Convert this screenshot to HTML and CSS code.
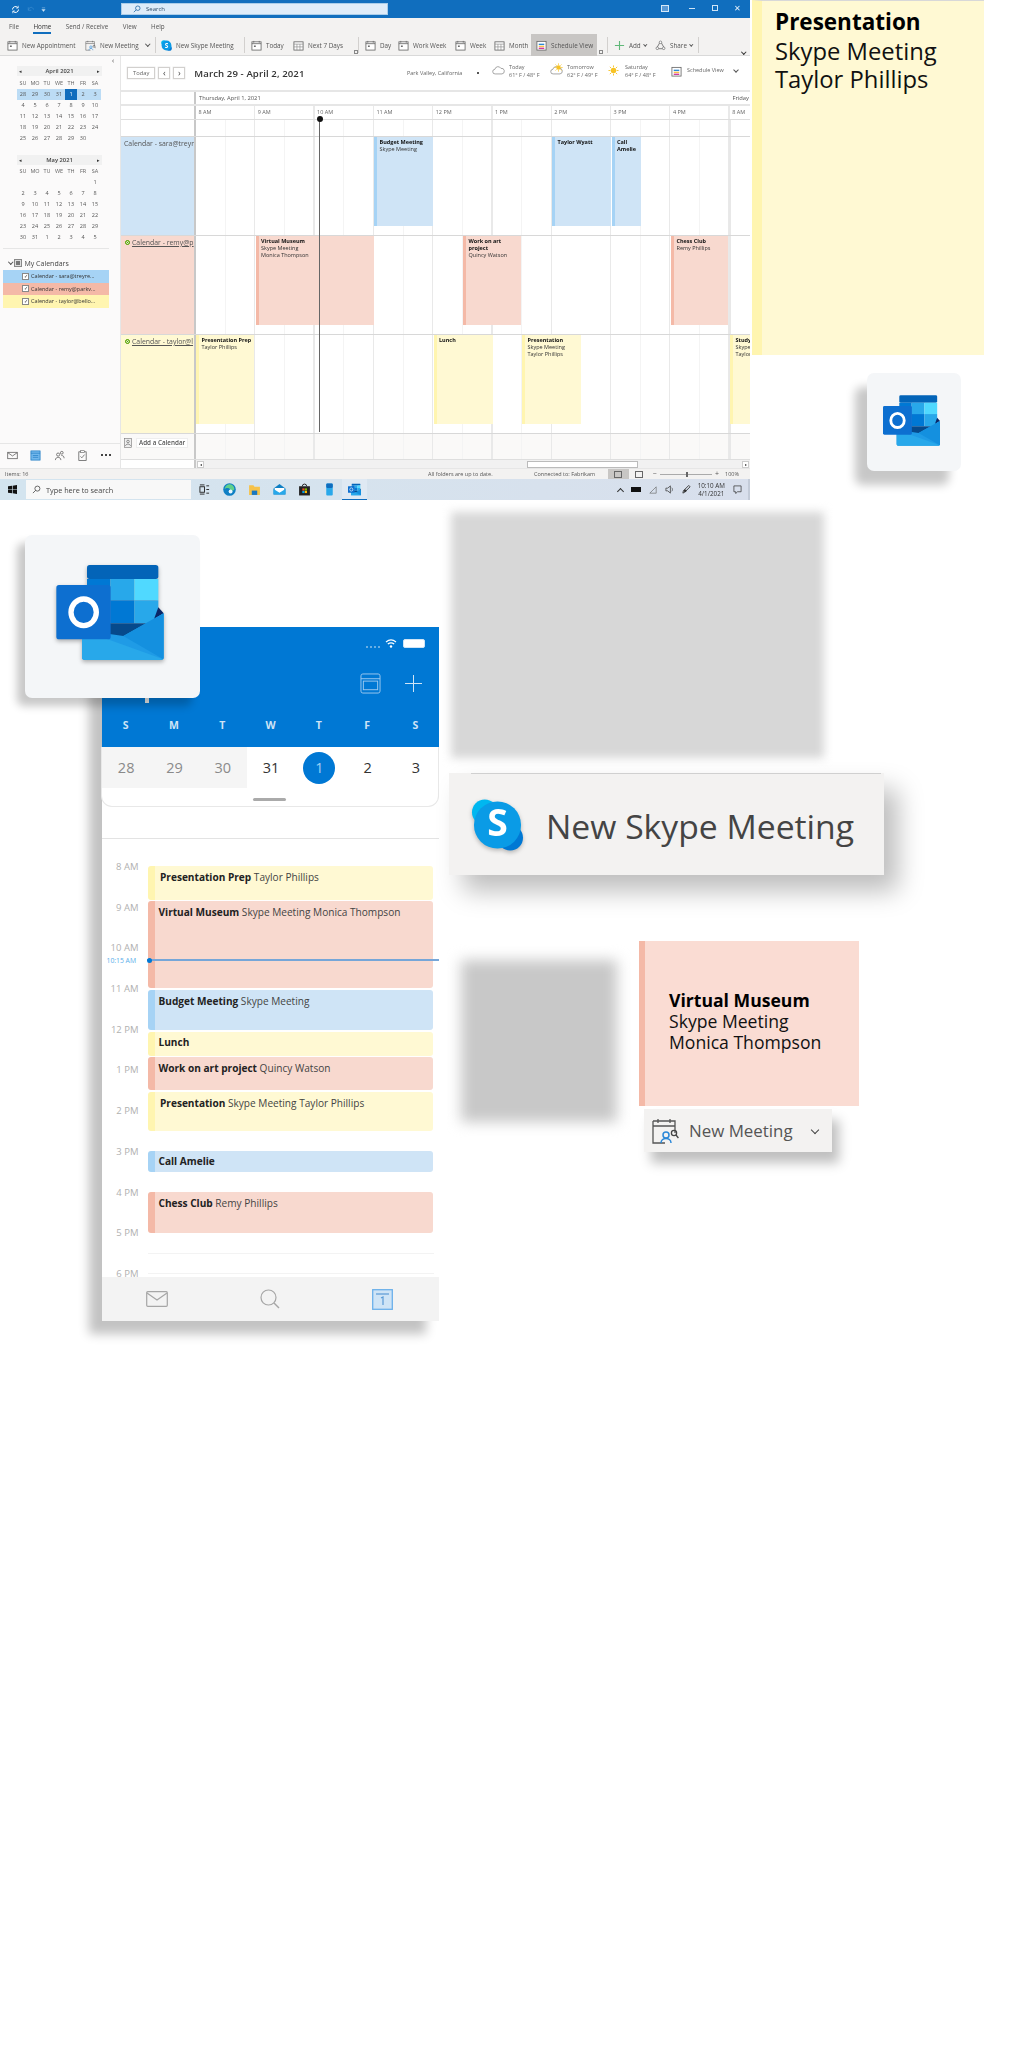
FILE: index.html
```html
<!DOCTYPE html>
<html lang="en">
<head>
<meta charset="utf-8">
<title>Outlook schedule view</title>
<link rel="stylesheet" href="styles.css">
</head>
<body>
<svg class="defs" width="0" height="0" aria-hidden="true">
  <defs>
    <symbol id="cal" viewBox="0 0 12 12"><rect x="1" y="2" width="10" height="9" fill="#fff" stroke="#666" stroke-width=".9"/><path d="M1 4h10" stroke="#666" stroke-width=".9"/><path d="M3 1v2M9 1v2" stroke="#666" stroke-width=".8"/><rect x="3.2" y="6" width="2" height="1.6" fill="#666"/></symbol>
    <symbol id="calgrid" viewBox="0 0 12 12"><rect x="1" y="2" width="10" height="9" fill="#fff" stroke="#666" stroke-width=".9"/><path d="M1 4.5h10M1 7.5h10M4.3 4.5V11M7.6 4.5V11" stroke="#888" stroke-width=".7"/></symbol>
    <symbol id="calsched" viewBox="0 0 12 12"><rect x="1" y="1.5" width="10" height="9.5" fill="#fff" stroke="#666" stroke-width=".9"/><rect x="3" y="4" width="6" height="1.5" fill="#2b88d8"/><rect x="3" y="6.2" width="6" height="1.5" fill="#f6c24a"/><rect x="3" y="8.3" width="6" height="1.5" fill="#d13a9c"/></symbol>
    <symbol id="calpeople" viewBox="0 0 28 26"><path d="M2 3h22v12M2 3v22h12M2 8h22M7 1v4M19 1v4" fill="none" stroke="#555" stroke-width="1.3"/><circle cx="15" cy="17" r="3" fill="none" stroke="#2b88d8" stroke-width="1.5"/><path d="M10 25c0-6 10-6 10 0" fill="none" stroke="#2b88d8" stroke-width="1.5"/><circle cx="23" cy="15" r="2.6" fill="none" stroke="#444" stroke-width="1.3"/><path d="M25 17l2.4 3" stroke="#444" stroke-width="1.3"/></symbol>
    <symbol id="outlook" viewBox="168 135 322 285">
      <rect x="260" y="135" width="214" height="42" rx="8" fill="#0364b8"/>
      <rect x="260" y="177" width="70" height="64" fill="#0078d4"/><rect x="330" y="177" width="72" height="64" fill="#28a8ea"/><rect x="402" y="177" width="72" height="64" fill="#50d9ff"/>
      <rect x="260" y="241" width="70" height="69" fill="#0364b8"/><rect x="330" y="241" width="72" height="69" fill="#0078d4"/><rect x="402" y="241" width="72" height="69" fill="#28a8ea"/>
      <rect x="260" y="310" width="214" height="45" fill="#064a8c"/>
      <path d="M474 262l16 18-30 20z" fill="#0a2767"/>
      <path d="M245 330l124 18 121-68v132q0 8-8 8H253q-8 0-8-8z" fill="#1f9be6"/>
      <path d="M245 330l244 88q-3 2-7 2H253q-8 0-8-8z" fill="#28a8ea"/>
      <path d="M369 348L490 280v132q0 3-1 6z" fill="#1490df"/>
      <rect x="168" y="195" width="163" height="163" rx="8" fill="#0d6fd0"/>
      <ellipse cx="250" cy="277" rx="38" ry="40" fill="none" stroke="#fff" stroke-width="16"/>
    </symbol>
    <symbol id="skype" viewBox="0 0 54 54">
      <circle cx="14" cy="14" r="13" fill="#00b7f0"/><circle cx="40" cy="40" r="13" fill="#0078d4"/><circle cx="27" cy="27" r="24" fill="#0a9be6"/>
    </symbol>
    <symbol id="sun" viewBox="0 0 12 12"><circle cx="6" cy="6" r="3" fill="#f7c325"/><path d="M6 .5v2M6 9.5v2M.5 6h2M9.5 6h2M2 2l1.5 1.5M8.5 8.5L10 10M2 10l1.5-1.5M8.5 3.5L10 2" stroke="#f7c325" stroke-width="1"/></symbol>
    <symbol id="cloud" viewBox="0 0 14 9"><path d="M3.5 8.2a2.5 2.5 0 0 1-.4-5A3.5 3.5 0 0 1 9.6 2.2a3 3 0 0 1 1.2 6z" fill="#fff" stroke="#777" stroke-width=".7"/></symbol>
  </defs>
</svg>

<main class="canvas">

  <section class="win">
    <header class="titlebar">
      <div class="qa">
        <svg class="ic9" viewBox="0 0 12 12"><path d="M2 6a4 4 0 0 1 7-2.6M10 6a4 4 0 0 1-7 2.6" fill="none" stroke="#fff" stroke-width="1.3"/><path d="M9.6 1v3H6.800M2.400 11V8h2.800" fill="none" stroke="#fff" stroke-width="1"/></svg>
        <svg class="ic9 dim" viewBox="0 0 12 12"><path d="M3 7c1-5 6-5 7-1M3 3v4h4" fill="none" stroke="#3f8fd0" stroke-width="1"/></svg>
        <svg class="ic5" viewBox="0 0 6 6"><path d="M1 1h4M1 3h4L3 5.5z" fill="#cfe4f6" stroke="#cfe4f6" stroke-width=".5"/></svg>
      </div>
      <div class="searchbox"><svg class="ic8" viewBox="0 0 10 10"><circle cx="6" cy="4" r="2.8" fill="none" stroke="#0f5a9c" stroke-width=".9"/><path d="M4 6L1 9" stroke="#0f5a9c" stroke-width=".9"/></svg><span>Search</span></div>
      <div class="winctl">
        <span class="wc-box"></span><span class="wc-min"></span><span class="wc-max"></span><span class="wc-x">✕</span>
      </div>
    </header>
    <nav class="tabs">
      <span>File</span><span class="on">Home</span><span>Send / Receive</span><span>View</span><span>Help</span>
    </nav>
    <div class="ribbon">
      <div class="ri"><svg class="ic11"><use href="#cal"/></svg><span>New Appointment</span></div>
      <div class="ri"><svg class="ic11"><use href="#calpeople"/></svg><span>New Meeting</span><i class="chev"></i></div>
      <div class="sep"></div>
      <div class="ri"><svg class="ic11" viewBox="0 0 54 54"><use href="#skype"/><text x="27" y="38" text-anchor="middle" class="s-small">S</text></svg><span>New Skype Meeting</span></div>
      <div class="sep"></div>
      <div class="ri"><svg class="ic11"><use href="#cal"/></svg><span>Today</span></div>
      <div class="ri"><svg class="ic11"><use href="#calgrid"/></svg><span>Next 7 Days</span></div>
      <div class="launch"></div>
      <div class="sep"></div>
      <div class="ri"><svg class="ic11"><use href="#cal"/></svg><span>Day</span></div>
      <div class="ri"><svg class="ic11"><use href="#cal"/></svg><span>Work Week</span></div>
      <div class="ri"><svg class="ic11"><use href="#cal"/></svg><span>Week</span></div>
      <div class="ri"><svg class="ic11"><use href="#calgrid"/></svg><span>Month</span></div>
      <div class="ri active"><svg class="ic11"><use href="#calsched"/></svg><span>Schedule View</span></div>
      <div class="launch"></div>
      <div class="sep"></div>
      <div class="ri"><svg class="ic11" viewBox="0 0 12 12"><path d="M6 1v10M1 6h10" stroke="#5fb878" stroke-width="1.2"/></svg><span>Add</span><i class="chev tiny"></i></div>
      <div class="ri"><svg class="ic11" viewBox="0 0 12 12"><path d="M6 1.5L10.5 9.5H1.5z" fill="none" stroke="#666" stroke-width=".9"/><circle cx="6" cy="2.5" r="1.4" fill="#fff" stroke="#666" stroke-width=".7"/><circle cx="2.5" cy="9" r="1.4" fill="#fff" stroke="#666" stroke-width=".7"/><circle cx="9.5" cy="9" r="1.4" fill="#fff" stroke="#666" stroke-width=".7"/></svg><span>Share</span><i class="chev tiny"></i></div>
      <div class="sep"></div>
      <i class="chev collapse"></i>
    </div>

    <div class="work">
      <aside class="side">
        <div class="side-top">
          <span class="side-hide">‹</span>
          <div class="mini">
            <div class="mini-title"><b>◂</b><strong>April 2021</strong><b>▸</b></div>
            <div class="mini-grid">
              <span class="dow">SU</span><span class="dow">MO</span><span class="dow">TU</span><span class="dow">WE</span><span class="dow">TH</span><span class="dow">FR</span><span class="dow">SA</span>
              <span class="wk">28</span><span class="wk">29</span><span class="wk">30</span><span class="wk">31</span><span class="today">1</span><span class="wk">2</span><span class="wk">3</span>
              <span>4</span><span>5</span><span>6</span><span>7</span><span>8</span><span>9</span><span>10</span>
              <span>11</span><span>12</span><span>13</span><span>14</span><span>15</span><span>16</span><span>17</span>
              <span>18</span><span>19</span><span>20</span><span>21</span><span>22</span><span>23</span><span>24</span>
              <span>25</span><span>26</span><span>27</span><span>28</span><span>29</span><span>30</span><span></span>
            </div>
          </div>
          <div class="mini second">
            <div class="mini-title"><b>◂</b><strong>May 2021</strong><b>▸</b></div>
            <div class="mini-grid">
              <span class="dow">SU</span><span class="dow">MO</span><span class="dow">TU</span><span class="dow">WE</span><span class="dow">TH</span><span class="dow">FR</span><span class="dow">SA</span>
              <span></span><span></span><span></span><span></span><span></span><span></span><span>1</span>
              <span>2</span><span>3</span><span>4</span><span>5</span><span>6</span><span>7</span><span>8</span>
              <span>9</span><span>10</span><span>11</span><span>12</span><span>13</span><span>14</span><span>15</span>
              <span>16</span><span>17</span><span>18</span><span>19</span><span>20</span><span>21</span><span>22</span>
              <span>23</span><span>24</span><span>25</span><span>26</span><span>27</span><span>28</span><span>29</span>
              <span>30</span><span>31</span><span>1</span><span>2</span><span>3</span><span>4</span><span>5</span>
            </div>
          </div>
          <div class="mycals">
            <div class="mycals-h"><i class="chev"></i><span class="grp"></span><span>My Calendars</span></div>
            <div class="calrow c-blue"><span class="check">✓</span><span>Calendar - sara@treyre...</span></div>
            <div class="calrow c-red"><span class="check">✓</span><span>Calendar - remy@parkv...</span></div>
            <div class="calrow c-yel"><span class="check">✓</span><span>Calendar - taylor@bello...</span></div>
          </div>
        </div>
        <div class="side-nav">
          <svg class="ic11" viewBox="0 0 12 12"><rect x=".8" y="2.5" width="10.4" height="7" fill="none" stroke="#555" stroke-width=".8"/><path d="M1 3l5 3.5L11 3" fill="none" stroke="#555" stroke-width=".8"/></svg>
          <svg class="ic11" viewBox="0 0 12 12"><rect x="1" y="1" width="10" height="10" fill="#74b8ec" stroke="#1a78c2" stroke-width=".8"/><path d="M1 3.500h10M3 6h6M3 8h6" stroke="#1a78c2" stroke-width=".7"/></svg>
          <svg class="ic11" viewBox="0 0 12 12"><circle cx="4.5" cy="5" r="1.7" fill="none" stroke="#555" stroke-width=".8"/><circle cx="8.5" cy="3" r="1.5" fill="none" stroke="#555" stroke-width=".8"/><path d="M1.5 11c0-4 6-4 6 0M8 6c2 0 3 1 3 3" fill="none" stroke="#555" stroke-width=".8"/></svg>
          <svg class="ic11" viewBox="0 0 12 12"><rect x="2" y="2" width="8" height="9.5" fill="none" stroke="#555" stroke-width=".8"/><rect x="4" y=".8" width="4" height="2" fill="#fff" stroke="#555" stroke-width=".6"/><path d="M3.800 7l1.500 1.500L8.300 5" fill="none" stroke="#555" stroke-width=".8"/></svg>
          <span class="dots"></span>
        </div>
      </aside>

      <div class="sched">
        <div class="sched-top">
          <div class="btns"><span class="btn">Today</span><span class="btn sq">‹</span><span class="btn sq">›</span></div>
          <h1 class="range">March 29 - April 2, 2021</h1>
          <div class="weather">
            <span class="place">Park Valley, California</span><i class="caret"></i>
            <div class="wx wx-a"><svg class="ic-cloud"><use href="#cloud"/></svg><p>Today<br>61° F / 48° F</p></div>
            <div class="wx wx-b"><svg class="ic-cloud"><use href="#cloud"/></svg><svg class="ic-sun over"><use href="#sun"/></svg><p>Tomorrow<br>62° F / 49° F</p></div>
            <div class="wx wx-c"><svg class="ic-sun"><use href="#sun"/></svg><p>Saturday<br>64° F / 48° F</p></div>
            <div class="wx wx-d"><svg class="ic11"><use href="#calsched"/></svg><span>Schedule View</span><i class="chev wide"></i></div>
          </div>
        </div>

        <div class="row hdr-date"><div class="lab"></div><div class="lane-d"><span>Thursday, April 1, 2021</span><span class="fri">Friday</span></div></div>
        <div class="row hdr-time"><div class="lab"></div><div class="lane-h">
          <span>8 AM</span><span>9 AM</span><span>10 AM</span><span>11 AM</span><span>12 PM</span><span>1 PM</span><span>2 PM</span><span>3 PM</span><span>4 PM</span><span>8 AM</span>
        </div></div>
        <div class="row hdr-all"><div class="lab"></div><div class="lane"></div></div>

        <div class="row cal"><div class="lab blue"><span class="labtxt">Calendar - sara@treyr</span></div><div class="lane">
          <div class="ev e-blue" style="left:178px;width:59px"><b>Budget Meeting</b>Skype Meeting</div>
          <div class="ev e-blue" style="left:356px;width:59px"><b>Taylor Wyatt</b></div>
          <div class="ev e-blue" style="left:415.5px;width:29px"><b>Call Amelie</b></div>
        </div></div>
        <div class="row cal"><div class="lab red"><i class="pres"></i><span class="labtxt link">Calendar - remy@p</span></div><div class="lane">
          <div class="ev e-red" style="left:59.5px;width:118px"><b>Virtual Museum</b>Skype Meeting<br>Monica Thompson</div>
          <div class="ev e-red" style="left:267px;width:58px"><b>Work on art project</b>Quincy Watson</div>
          <div class="ev e-red" style="left:475px;width:57px"><b>Chess Club</b>Remy Phillips</div>
        </div></div>
        <div class="row cal"><div class="lab yel"><i class="pres"></i><span class="labtxt link">Calendar - taylor@l</span></div><div class="lane">
          <div class="ev e-yel" style="left:0;width:58px"><b>Presentation Prep</b>Taylor Phillips</div>
          <div class="ev e-yel" style="left:237.5px;width:59px"><b>Lunch</b></div>
          <div class="ev e-yel" style="left:326px;width:59px"><b>Presentation</b>Skype Meeting<br>Taylor Phillips</div>
          <div class="ev e-yel" style="left:534px;width:20px"><b>Study</b>Skype<br>Taylor</div>
        </div></div>

        <div class="row addrow">
          <div class="lab"><svg class="ic8b" viewBox="0 0 8 10"><rect x=".5" y=".5" width="7" height="9" fill="#eee" stroke="#777" stroke-width=".6"/><circle cx="4" cy="3.5" r="1.3" fill="none" stroke="#555" stroke-width=".6"/><path d="M1.500 8c0-2.500 5-2.500 5 0" fill="none" stroke="#555" stroke-width=".6"/></svg><span class="addbtn">Add a Calendar</span></div>
          <div class="lane tint"></div>
        </div>
        <div class="row scrollrow">
          <div class="lab"></div>
          <div class="hscroll"><span class="sbtn">◂</span><span class="thumb"></span><span class="sbtn">▸</span></div>
        </div>
        <div class="nowline"></div>
      </div>
    </div>

    <footer class="status">
      <span class="st-items">Items: 16</span>
      <span class="st-sync">All folders are up to date.</span>
      <span class="st-conn">Connected to: Fabrikam</span>
      <span class="st-view on"><i></i></span><span class="st-view"><i></i></span>
      <span class="st-zoom"><span>−</span><span class="slider"></span><span>+</span></span>
      <span class="st-pct">100%</span>
    </footer>
    <div class="taskbar">
      <svg class="start" viewBox="0 0 10 10"><path d="M0 1.500L4.500.8v3.800H0zM5.200.7L10 0v4.600H5.200zM0 5.300h4.500v3.900L0 8.500zM5.200 5.300H10V10l-4.800-.7z" fill="#111"/></svg>
      <div class="tsearch"><svg class="ic9" viewBox="0 0 10 10"><circle cx="6" cy="4" r="2.8" fill="none" stroke="#333" stroke-width=".8"/><path d="M4 6L1 9" stroke="#333" stroke-width=".8"/></svg><span>Type here to search</span></div>
      <div class="tapps">
        <span class="tapp"><svg class="ic11" viewBox="0 0 12 12"><rect x="1" y="3" width="5" height="6" fill="none" stroke="#222" stroke-width="1"/><path d="M8 2h3M8 6h3M8 10h3M1 1h5M1 11h5" stroke="#222" stroke-width="1"/></svg></span>
        <span class="tapp"><svg class="ic12" viewBox="0 0 12 12"><circle cx="6" cy="6" r="5.8" fill="#0f7fc4"/><path d="M1.500 6a4.500 4.500 0 0 1 9-.5c0 2-4 2-4 .5 0-2-5-2-5 0z" fill="#5fd08c"/><circle cx="7" cy="7.8" r="1.8" fill="#e8f6ff"/></svg></span>
        <span class="tapp"><svg class="ic12" viewBox="0 0 12 12"><path d="M1 2h4l1 1.500h5V11H1z" fill="#f6c24a"/><rect x="3.5" y="7" width="5" height="4" fill="#1a78c2"/></svg></span>
        <span class="tapp"><svg class="ic12" viewBox="0 0 12 12"><path d="M6 1l5.500 4v5.500h-11V5z" fill="#0f7fc4"/><path d="M1.500 4.500h9v3L6 9.500l-4.500-2z" fill="#fff"/><path d="M.5 5.500L6 9l5.500-3.500v5h-11z" fill="#28a8ea"/></svg></span>
        <span class="tapp"><svg class="ic12" viewBox="0 0 12 12"><path d="M4 3a2 2 0 0 1 4 0" fill="none" stroke="#222" stroke-width=".9"/><rect x="1" y="3" width="10" height="8.5" fill="#222"/><rect x="4" y="5" width="2" height="2" fill="#f25022"/><rect x="6.3" y="5" width="2" height="2" fill="#7fba00"/><rect x="4" y="7.3" width="2" height="2" fill="#00a4ef"/><rect x="6.3" y="7.3" width="2" height="2" fill="#ffb900"/></svg></span>
        <span class="tapp"><svg class="ic12" viewBox="0 0 12 12"><rect x="3" y=".5" width="6" height="11" rx="1" fill="#28a8ea"/><rect x="3" y=".5" width="6" height="4" rx="1" fill="#0f6cbd"/></svg></span>
        <span class="tapp act"><svg class="ic12"><use href="#outlook"/></svg></span>
      </div>
      <div class="tray">
        <i class="tr-up"></i><i class="tr-bat"></i>
        <svg class="ic8" viewBox="0 0 10 10"><path d="M1 9L9 1v8z" fill="none" stroke="#666" stroke-width=".8"/></svg>
        <svg class="ic9" viewBox="0 0 10 10"><path d="M1 3.500h2L6 1v8L3 6.500H1z" fill="none" stroke="#333" stroke-width=".8"/><path d="M7.500 3c1 1 1 3 0 4" fill="none" stroke="#333" stroke-width=".7"/></svg>
        <svg class="ic9" viewBox="0 0 10 10"><path d="M1 9l2-1 6-6-1.500-1.500-6 6z" fill="none" stroke="#333" stroke-width="1"/><circle cx="3.5" cy="6.5" r="1.5" fill="#333"/></svg>
        <span class="clock">10:10 AM<br>4/1/2021</span>
        <svg class="ic9" viewBox="0 0 10 10"><path d="M1 1h8v6.500H5L3 9.500v-2H1z" fill="none" stroke="#333" stroke-width=".8"/></svg>
      </div>
    </div>
  </section>

  <article class="card-pres"><b>Presentation</b>Skype Meeting<br>Taylor Phillips</article>

  <div class="tile tile-s"><svg class="logo-s"><use href="#outlook"/></svg></div>

  <div class="ghost ghost-a"></div>
  <div class="ghost ghost-b"></div>

  <section class="phone">
    <div class="ph-head">
      <div class="ph-status">
        <span class="sig"></span>
        <svg class="wifi" viewBox="0 0 12 9"><path d="M1 3c3-2.500 7-2.500 10 0M2.800 5c2-1.500 4.400-1.500 6.400 0" fill="none" stroke="#fff" stroke-width="1.2"/><circle cx="6" cy="7.5" r="1.2" fill="#fff"/></svg>
        <span class="batt"></span>
      </div>
      <div class="ph-actions">
        <svg class="ph-ic" viewBox="0 0 22 22"><rect x="1" y="1" width="20" height="20" rx="2" fill="none" stroke="#9cc8ef" stroke-width="1"/><path d="M1 6h20" stroke="#9cc8ef"/><rect x="3.5" y="8.5" width="15" height="9" fill="none" stroke="#9cc8ef"/></svg>
        <svg class="ph-plus" viewBox="0 0 17 17"><path d="M8.500 0v17M0 8.500h17" stroke="#cfe4f6" stroke-width="1"/></svg>
      </div>
      <div class="ph-week"><span>S</span><span>M</span><span>T</span><span>W</span><span>T</span><span>F</span><span>S</span></div>
    </div>
    <div class="ph-card">
      <div class="ph-dates">
        <span class="past">28</span><span class="past">29</span><span class="past">30</span><span>31</span><span><em class="ph-today">1</em></span><span>2</span><span>3</span>
      </div>
      <div class="handle"></div>
    </div>
    <div class="ph-time">
      <div class="ph-hours">
        <span>8 AM</span><span>9 AM</span><span>10 AM</span><span>11 AM</span><span>12 PM</span><span>1 PM</span><span>2 PM</span><span>3 PM</span><span>4 PM</span><span>5 PM</span><span>6 PM</span>
      </div>
      <div class="pe e-yel" style="top:27px;height:34px"><p class="inset"><b>Presentation Prep</b> Taylor Phillips</p></div>
      <div class="pe e-red" style="top:62px;height:87px"><p><b>Virtual Museum</b> Skype Meeting Monica Thompson</p></div>
      <div class="pe e-blue" style="top:151px;height:40px"><p><b>Budget Meeting</b> Skype Meeting</p></div>
      <div class="pe e-yel" style="top:193px;height:24px"><p class="mid"><b>Lunch</b></p></div>
      <div class="pe e-red" style="top:218px;height:33px"><p><b>Work on art project</b> Quincy Watson</p></div>
      <div class="pe e-yel" style="top:253px;height:39px"><p class="inset"><b>Presentation</b> Skype Meeting Taylor Phillips</p></div>
      <div class="pe e-blue" style="top:312px;height:21px"><p class="mid"><b>Call Amelie</b></p></div>
      <div class="pe e-red" style="top:353px;height:41px"><p><b>Chess Club</b> Remy Phillips</p></div>
      <div class="ph-rule r1"></div><div class="ph-rule r2"></div>
      <div class="ph-now"><span>10:15 AM</span></div>
    </div>
    <div class="ph-tabs">
      <svg class="t-mail" viewBox="0 0 22 16"><rect x=".7" y=".7" width="20.6" height="14.6" rx="1" fill="none" stroke="#a6a6a6" stroke-width="1.2"/><path d="M1 2l10 7 10-7" fill="none" stroke="#a6a6a6" stroke-width="1.2"/></svg>
      <svg class="t-search" viewBox="0 0 20 20"><circle cx="8.5" cy="8.5" r="7.5" fill="none" stroke="#a6a6a6" stroke-width="1.2"/><path d="M14 14l5 5" stroke="#a6a6a6" stroke-width="1.4"/></svg>
      <svg class="t-cal" viewBox="0 0 21 21"><rect x=".7" y=".7" width="19.6" height="19.6" fill="#cfe4f6" stroke="#6cb0ea" stroke-width="1.3"/><path d="M4 5h13" stroke="#5a9ad6" stroke-width="1.2"/><path d="M9 9l2-1v8" fill="none" stroke="#5a9ad6" stroke-width="1.2"/></svg>
    </div>
  </section>

  <div class="tile tile-b"><svg class="logo-b"><use href="#outlook"/></svg></div>

  <div class="skype-btn">
    <svg class="skype-ic" viewBox="0 0 54 54"><use href="#skype"/><text x="27" y="38" text-anchor="middle" class="s-big">S</text></svg>
    <span>New Skype Meeting</span>
  </div>

  <article class="card-vm"><b>Virtual Museum</b>Skype Meeting<br>Monica Thompson</article>

  <div class="meet-btn">
    <svg class="meet-ic"><use href="#calpeople"/></svg>
    <span>New Meeting</span>
    <i class="chev big"></i>
  </div>

</main>
</body>
</html>
```

FILE: styles.css
```css
* { box-sizing: border-box; }
html, body { margin: 0; padding: 0; background: #fff; }
body { font-family: "Open Sans", "Noto Sans", "Liberation Sans", sans-serif; color: #333; }
p, h1 { margin: 0; font-weight: normal; }
.defs { position: absolute; }
svg { display: block; flex: none; }
.canvas { position: relative; width: 1024px; height: 2048px; overflow: hidden; }

.ic5 { width: 5px; height: 5px; }
.ic8 { width: 8px; height: 8px; }
.ic8b { width: 8px; height: 10px; }
.ic9 { width: 9px; height: 9px; }
.ic11 { width: 11px; height: 11px; }
.ic12 { width: 13px; height: 13px; }

/* window */
.win { position: absolute; left: 0; top: 0; width: 750px; height: 500px; display: flex; flex-direction: column; background: #f3f2f1; overflow: hidden; filter: blur(.3px); }
.titlebar { height: 18px; background: #106ebe; display: flex; align-items: center; flex: none; position: relative; }
.qa { display: flex; align-items: center; gap: 6px; width: 121px; padding-left: 11px; }
.dim { opacity: .9; }
.searchbox { width: 267px; height: 12px; background: #deecf9; border: 1px solid #a9cdea; display: flex; align-items: center; gap: 5px; padding-left: 11px; font-size: 6px; }
.searchbox span { color: #2d4a66; }
.winctl { position: absolute; right: 0; top: 0; height: 18px; width: 100px; color: #fff; }
.winctl span { position: absolute; top: 5px; }
.wc-box { left: 11px; width: 8px; height: 7px; border: 1px solid #d5e8f7; background: #5a9ad6; }
.wc-min { left: 39px; top: 8px !important; width: 6px; height: 1px; background: #cfe4f6; }
.wc-max { left: 62px; width: 6px; height: 6px; border: 1px solid #cfe4f6; }
.wc-x { left: 84px; top: 2px !important; font-size: 8px; line-height: 12px; color: #e6f1fa; }

.tabs { height: 16px; display: flex; align-items: center; gap: 14.5px; padding-left: 9px; font-size: 6.3px; color: #555; flex: none; }
.tabs .on { position: relative; color: #333; }
.tabs .on::after { content: ""; position: absolute; left: 0; right: 0; bottom: -3px; height: 1.5px; background: #106ebe; }

.ribbon { height: 22px; padding-left: 7px; display: grid; grid-template-columns: 78px 70px 6px 83px 7px 42px 59px 6px 7px 33px 57px 39px 37px 66px 10px 7px 41px 43px 6px 1fr; align-items: center; font-size: 6.3px; color: #555; flex: none; border-bottom: 1px solid #d9d9d9; }
.ri { display: flex; align-items: center; gap: 4px; height: 22px; white-space: nowrap; }
.ri.active { background: #c8c6c4; padding-left: 5px; }
.sep { width: 1px; height: 16px; background: #d2d0ce; }
.launch { width: 4px; height: 4px; border: 1px solid #888; justify-self: start; align-self: end; margin-bottom: 2px; margin-left: 2px; }
.chev { width: 3.5px; height: 3.5px; border: solid #555; border-width: 0 .8px .8px 0; transform: rotate(45deg); display: inline-block; margin-left: 3px; margin-top: -2px; flex: none; }
.chev.tiny { width: 2.5px; height: 2.5px; margin-left: -1px; }
.collapse { justify-self: end; margin-right: 5px; align-self: end; margin-bottom: 3px; border-color: #333; }
.s-small { font: 700 32px "Open Sans", sans-serif; fill: #fff; }

.work { flex: 1; display: flex; min-height: 0; background: #fff; }
.side { width: 121px; background: #fbfafa; display: flex; flex-direction: column; border-right: 1px solid #e6e6e6; flex: none; font-size: 5.5px; color: #555; }
.side-top { flex: 1; position: relative; padding-top: 10px; }
.side-hide { position: absolute; right: 6px; top: 1px; font-size: 7px; line-height: 8px; color: #333; }
.mini { width: 85px; margin-left: 17px; }
.mini.second { margin-top: 11px; }
.mini-title { height: 10px; background: #f1f1f1; display: flex; justify-content: space-between; align-items: center; padding: 0 2px; }
.mini-title b { font-size: 5px; font-weight: normal; color: #333; }
.mini-title strong { font-size: 5.8px; font-weight: 600; color: #444; }
.mini-grid { display: grid; grid-template-columns: repeat(7, 12px); grid-auto-rows: 11px; margin-top: 1.5px; text-align: center; line-height: 11px; }
.mini-grid .dow { color: #666; }
.mini-grid .wk { background: #bcdcf5; }
.mini-grid .today { background: #0f6cbd; color: #fff; }
.mycals { position: absolute; left: 3px; top: 192px; width: 106px; border-top: 1px solid #e6e6e6; }
.mycals-h { height: 21px; padding: 7px 0 0 3px; display: flex; align-items: center; gap: 2px; font-size: 7px; color: #444; white-space: nowrap; }
.grp { width: 6px; height: 6px; background: #777; border: 1px solid #ddd; outline: 1px solid #888; margin-right: 2px; }
.calrow { height: 12.6px; display: flex; align-items: center; gap: 2px; padding-left: 19px; font-size: 5.5px; color: #333; white-space: nowrap; }
.c-blue { background: #a6d3f5; }
.c-red { background: #f4b9a7; }
.c-yel { background: #fff5b0; }
.check { width: 7px; height: 7px; background: #fff; border: 1px solid #888; font-size: 5px; line-height: 5px; text-align: center; }
.side-nav { height: 25px; border-top: 1px solid #e6e6e6; display: flex; align-items: center; justify-content: space-between; padding: 0 9px 2px 7px; }
.dots { width: 11px; height: 2px; background: radial-gradient(circle, #444 1px, transparent 1.1px) 0 0/4px 2px repeat-x; }

.sched { flex: 1; display: flex; flex-direction: column; position: relative; min-width: 0; }
.sched-top { height: 36px; display: flex; align-items: center; padding-left: 6px; border-bottom: 2px solid #e6e6e6; position: relative; flex: none; }
.btns { display: flex; gap: 3px; }
.btn { height: 12.5px; min-width: 12px; padding: 0 5px; border: 1px solid #d2d0ce; background: #fff; font-size: 5.8px; line-height: 10.5px; color: #666; text-align: center; box-shadow: 0 0 0 .5px #eee; }
.btn.sq { width: 12px; padding: 0; font-size: 9px; line-height: 9px; color: #444; }
.range { font-size: 9.6px; font-weight: 600; color: #333; margin-left: 9px; white-space: nowrap; letter-spacing: .1px; }
.weather { position: absolute; left: 0; top: 0; height: 34px; width: 629px; font-size: 5.5px; color: #666; }
.place { position: absolute; left: 286px; top: 12.5px; white-space: nowrap; }
.caret { position: absolute; left: 356px; top: 16px; width: 2px; height: 2px; background: #555; }
.wx { position: absolute; top: 7px; height: 16px; line-height: 7.5px; white-space: nowrap; }
.wx p { position: absolute; top: 1px; }
.ic-cloud { position: absolute; left: 0; top: 3px; width: 13px; height: 9px; }
.ic-sun { position: absolute; left: 0; top: 2px; width: 11px; height: 11px; }
.ic-sun.over { left: 4px; top: 0; width: 9px; height: 9px; }
.wx-a { left: 371px; } .wx-a p { left: 17px; }
.wx-b { left: 429px; } .wx-b p { left: 17px; }
.wx-c { left: 487px; } .wx-c p { left: 17px; }
.wx-d { left: 550px; display: flex; align-items: center; gap: 5px; top: 7px; height: 16px; }
.chev.wide { width: 4px; height: 4px; margin-left: 5px; }

.row { display: flex; flex: none; border-bottom: 1px solid #dedede; }
.lab { width: 73px; flex: none; overflow: hidden; white-space: nowrap; position: relative; font-size: 6.9px; color: #555; }
.hdr-date { height: 14px; border-bottom-width: 2px; border-bottom-color: #e6e6e6; }
.hdr-time { height: 14px; }
.hdr-all { height: 17px; border-bottom-color: #d8d8d8; border-bottom-width: 1.5px; }
.cal { height: 99px; border-bottom: 1.5px solid #d8d8d8; }
.lane, .lane-d, .lane-h { flex: 1; position: relative; border-left: 2px solid #c8c8c8; }
.lane { background-image: linear-gradient(90deg, transparent 533px, #e8e8e8 533px, #e8e8e8 535px, transparent 535px), repeating-linear-gradient(90deg, transparent 0 58px, #e9e9e9 58px 59.3px), repeating-linear-gradient(90deg, transparent 0 28.7px, #f4f4f4 28.7px 29.65px); }
.tint { background-color: #faf9f8; }
.lane-d { font-size: 5.8px; color: #555; line-height: 13px; padding-left: 3px; background: #fff; }
.fri { position: absolute; left: 536.5px; top: 0; }
.lane-h { display: flex; background: repeating-linear-gradient(90deg, transparent 0 58px, #e9e9e9 58px 59.3px); font-size: 5.5px; color: #666; line-height: 13px; }
.lane-h span { flex: 0 0 59.3px; padding-left: 2.5px; }
.ev { position: absolute; top: 0; height: 88.5px; padding: 2px 0 0 2.5px; font-size: 5.5px; line-height: 7px; color: #333; border-left: 3px solid; overflow: hidden; }
.ev b { display: block; color: #111; font-weight: 700; }
.e-blue { background: #cfe4f6; border-left-color: #a6d3f5; }
.e-red { background: #f8d9cf; border-left-color: #f4b9a7; }
.e-yel { background: #fff9d3; border-left-color: #fff5b0; }
.blue { background: #cfe4f6; } .red { background: #f8d9cf; } .yel { background: #fff9d3; }
.labtxt { position: absolute; left: 3px; top: 2px; }
.labtxt.link { left: 11px; text-decoration: underline; }
.pres { position: absolute; left: 4px; top: 4px; width: 5px; height: 5px; border-radius: 50%; background: #57a300; border: 1.2px solid #57a300; box-shadow: inset 0 0 0 .7px #fff; }
.addrow { height: 26px; }
.addrow .lab { display: flex; align-items: center; gap: 4px; padding: 0 0 8px 3px; background: #faf9f8; }
.addbtn { font-weight: 600; font-size: 6.3px; background: #fff; padding: 0 2px; border: 1px solid #eee; line-height: 8px; }
.scrollrow { height: 9px; border-bottom: 0; }
.scrollrow .lab { background: #fff; }
.hscroll { flex: 1; background: #f1f1f1; position: relative; border-left: 2px solid #c8c8c8; display: flex; align-items: center; justify-content: space-between; padding: 0 1px; }
.sbtn { width: 7px; height: 7px; border: 1px solid #ccc; background: #fff; font-size: 4px; line-height: 5px; text-align: center; color: #333; }
.thumb { position: absolute; left: 331px; top: 1px; width: 111px; height: 7px; background: #fff; border: 1px solid #bbb; }
.nowline { position: absolute; left: 198.3px; top: 63px; width: 1.2px; height: 313px; background: #666; }
.nowline::before { content: ""; position: absolute; left: -2.5px; top: -3px; width: 6px; height: 6px; border-radius: 50%; background: #111; }

.status { height: 11px; flex: none; position: relative; background: #f3f2f1; border-top: 1px solid #e6e6e6; font-size: 5.5px; line-height: 10px; color: #555; }
.status > span { position: absolute; top: 0; white-space: nowrap; }
.st-items { left: 5px; }
.st-sync { left: 428px; }
.st-conn { left: 534px; }
.st-view { width: 20px; height: 10px; left: 629px; }
.st-view i { display: block; width: 8px; height: 7px; margin: 1.5px 0 0 6px; border: 1px solid #666; }
.st-view.on { left: 608px; width: 21px; background: #c8c6c4; }
.st-zoom { left: 653px; width: 68px; display: flex; align-items: center; gap: 3px; height: 10px; font-size: 7px; }
.slider { width: 52px; height: 1px; background: #aaa; position: relative; }
.slider::after { content: ""; position: absolute; left: 26px; top: -2px; width: 2px; height: 5px; background: #666; }
.st-pct { left: 725px; }

.taskbar { height: 21px; flex: none; display: flex; align-items: center; background: linear-gradient(90deg, #d3e4ef, #d6e3ee 45%, #d8dfec); position: relative; border-right: 2px solid #c3cbd8; }
.start { width: 9px; height: 9px; margin-left: 8px; }
.tsearch { width: 165px; height: 19px; margin-left: 9px; background: #f8f8f8; display: flex; align-items: center; gap: 5px; padding-left: 6px; font-size: 7.3px; color: #444; white-space: nowrap; }
.tapps { display: flex; align-items: center; padding-left: 1px; height: 21px; }
.tapp { width: 25px; height: 21px; display: flex; align-items: center; justify-content: center; }
.tapp.act { background: #dfe9f3; border-bottom: 1.5px solid #0f6cbd; }
.tray { position: absolute; right: 6px; top: 0; height: 21px; display: flex; align-items: center; gap: 8px; font-size: 6.3px; color: #333; }
.tr-up { width: 5px; height: 5px; border: solid #333; border-width: 1px 0 0 1px; transform: rotate(45deg); margin-top: 3px; }
.tr-bat { width: 10px; height: 5px; background: #111; }
.clock { text-align: center; line-height: 7.5px; white-space: nowrap; margin-left: -1px; }

/* free canvas pieces */
.card-pres { position: absolute; left: 752px; top: 0; width: 232px; height: 355px; background: #fff9d3; border-left: 10px solid #fff5b0; border-top: 1px solid #d8d8d8; padding: 7px 0 0 13px; font-size: 23.8px; line-height: 28.5px; color: #111; }
.card-pres b { display: block; font-size: 22.5px; font-weight: 700; color: #000; }
.card-vm b { display: block; font-weight: 700; color: #000; }
.tile { position: absolute; background: #f4f6f8; border-radius: 7px; }
.tile-s { left: 867px; top: 373px; width: 94px; height: 98px; box-shadow: -12px 14px 10px rgba(0,0,0,.22); z-index: 2; padding: 22px 0 0 16px; }
.logo-s { width: 57px; height: 51px; }
.tile-b { left: 25px; top: 535px; width: 175px; height: 163px; box-shadow: -8px 8px 8px rgba(0,0,0,.22); z-index: 3; padding: 30px 0 0 31px; }
.logo-b { width: 108px; height: 95px; filter: drop-shadow(0 2px 2px rgba(0,0,0,.3)); }

.ghost { position: absolute; filter: blur(5px); }
.ghost-a { left: 451px; top: 512px; width: 373px; height: 246px; background: #d7d7d7; }
.ghost-b { left: 461px; top: 960px; width: 156px; height: 162px; background: #c8c8c8; filter: blur(7px); }

.phone { position: absolute; left: 101.5px; top: 627px; width: 337px; height: 694px; background: #fff; display: flex; flex-direction: column; box-shadow: -13px 13px 10px rgba(0,0,0,.24); z-index: 1; }
.ph-head { height: 120px; background: #0078d4; position: relative; flex: none; display: flex; flex-direction: column; }
.ph-head::before { content: ""; position: absolute; left: 43px; top: 71px; width: 4px; height: 5px; background: #e8e8e8; }
.ph-status { height: 20px; margin-top: 12px; display: flex; align-items: flex-start; justify-content: flex-end; gap: 4px; padding-right: 14px; }
.sig { width: 15px; height: 2px; margin-top: 7px; margin-right: 1px; background: radial-gradient(circle, #68aee4 1px, transparent 1px) 0 0/4px 2px repeat-x; }
.wifi { width: 12px; height: 9px; }
.batt { width: 22px; height: 9px; border: 1px solid #cfe4f6; background: #fff; border-radius: 2px; margin-left: 2px; }
.ph-actions { display: flex; justify-content: flex-end; align-items: center; gap: 24px; padding-right: 17px; margin-top: 3px; height: 43px; }
.ph-ic { width: 21px; height: 21px; }
.ph-plus { width: 17px; height: 17px; }
.ph-week { display: grid; grid-template-columns: repeat(7, 48.3px); text-align: center; color: #cfe4f6; font-size: 10.5px; font-weight: 700; margin-top: 12px; line-height: 16px; }
.ph-card { height: 60px; flex: none; border: solid #e8e8e8; border-width: 0 1px 1px 1px; border-radius: 0 0 11px 11px; position: relative; margin-left: -.5px; }
.ph-dates { display: grid; grid-template-columns: repeat(7, 48.3px); height: 41px; align-items: center; text-align: center; font-size: 14.5px; color: #333; }
.ph-dates span { height: 41px; line-height: 41px; }
.ph-dates .past { background: #f5f5f5; color: #8a8a8a; }
.ph-today { display: block; width: 32px; height: 32px; border-radius: 50%; background: #0078d4; color: #9fd0f5; font-style: normal; line-height: 32px; margin: 4.5px auto 0; }
.handle { width: 33px; height: 3px; background: #aaa; border-radius: 2px; margin: 10px auto 0; }
.ph-time { flex: 1; position: relative; margin-top: 31px; border-top: 1px solid #e3e3e3; overflow: hidden; }
.ph-hours { padding-top: 20px; width: 37px; display: flex; flex-direction: column; text-align: right; font-size: 9.5px; color: #b0b0b0; white-space: nowrap; }
.ph-hours span { height: 40.7px; flex: none; line-height: 16px; }
.pe { position: absolute; left: 46.5px; width: 285px; border-left-width: 7px; border-left-style: solid; font-size: 10.1px; color: #444; overflow: hidden; border-radius: 3px; }
.pe p { padding: 4px 0 0 3.5px; white-space: nowrap; line-height: 14px; }
.pe p.inset { padding-left: 5px; }
.pe p.mid { padding-top: 3px; }
.pe b { color: #222; font-weight: 700; }
.ph-now { position: absolute; left: 45px; right: 0; top: 120px; height: 2px; background: #76a6d8; }
.ph-now::before { content: ""; position: absolute; left: 0; top: -1.5px; width: 5px; height: 5px; border-radius: 50%; background: #0078d4; }
.ph-now span { position: absolute; left: -40px; top: -3px; font-size: 6.8px; color: #5aaeea; white-space: nowrap; line-height: 9px; }
.ph-rule { position: absolute; left: 46px; width: 286px; height: 1px; background: #f3f3f3; }
.r1 { top: 414px; } .r2 { top: 434px; }
.ph-tabs { height: 44px; flex: none; background: #f3f3f3; position: relative; display: flex; align-items: center; }
.t-mail { width: 22px; height: 16px; margin-left: 44.5px; }
.t-search { width: 20px; height: 20px; margin-left: 92px; }
.t-cal { width: 21px; height: 21px; margin-left: 92px; }

.skype-btn { position: absolute; left: 449px; top: 773px; width: 435px; height: 102px; background: #f3f2f1; box-shadow: 14px 16px 24px rgba(0,0,0,.26); display: flex; align-items: center; padding: 3px 0 0 22px; gap: 22px; z-index: 2; font-size: 33.7px; color: #444; white-space: nowrap; }
.skype-btn::before { content: ""; position: absolute; left: 22px; right: 3px; top: 0; height: 1px; background: #d0d0d0; }
.skype-ic { width: 53px; height: 54px; margin-top: -2px; filter: drop-shadow(0 2px 2px rgba(0,0,0,.25)); }
.s-big { font: 700 38px "Open Sans", sans-serif; fill: #fff; }

.card-vm { position: absolute; left: 639px; top: 941px; width: 220px; height: 165px; background: #fadcd3; border-left: 6px solid #f4b9a7; padding: 49px 0 0 24px; font-size: 17.6px; line-height: 21px; color: #111; }
.meet-btn { position: absolute; left: 644px; top: 1109px; width: 188px; height: 43px; background: #f3f2f1; box-shadow: 7px 11px 11px rgba(0,0,0,.25); display: flex; align-items: center; padding-left: 7px; font-size: 16.9px; color: #555; white-space: nowrap; z-index: 2; }
.meet-ic { width: 28px; height: 26px; margin-right: 10px; }
.chev.big { width: 6px; height: 6px; border-width: 0 1.3px 1.3px 0; margin-left: 19px; border-color: #444; }
```
